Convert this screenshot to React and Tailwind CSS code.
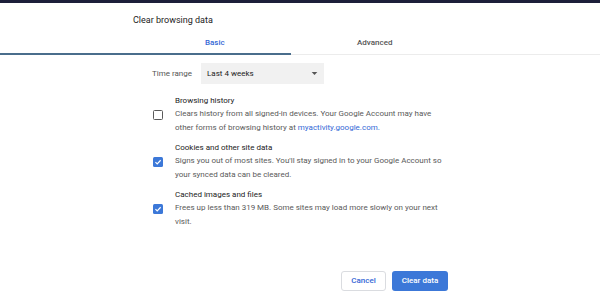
import { useState } from 'react'

function Checkbox({ checked, onChange }) {
  return (
    <button
      onClick={onChange}
      className={`w-[10px] h-[10px] rounded-[1.5px] flex items-center justify-center shrink-0 ${
        checked ? 'bg-[#3c78d8]' : 'border-[1.5px] border-[#5a5a5a] bg-white'
      }`}
    >
      {checked && (
        <svg viewBox="0 0 10 10" className="w-[8px] h-[8px]">
          <path d="M1.8 5.2 L4 7.3 L8.3 2.8" fill="none" stroke="white" strokeWidth="1.5" />
        </svg>
      )}
    </button>
  )
}

export default function App() {
  const [items, setItems] = useState([
    {
      id: 'history',
      title: 'Browsing history',
      desc: (
        <>
          Clears history from all signed-in devices. Your Google Account may have other forms of browsing history at{' '}
          <span className="text-[#3367d6]">myactivity.google.com.</span>
        </>
      ),
      checked: false
    },
    {
      id: 'cookies',
      title: 'Cookies and other site data',
      desc: "Signs you out of most sites. You'll stay signed in to your Google Account so your synced data can be cleared.",
      checked: true
    },
    {
      id: 'cache',
      title: 'Cached images and files',
      desc: 'Frees up less than 319 MB. Some sites may load more slowly on your next visit.',
      checked: true
    }
  ])

  function toggle(id) {
    setItems(prev => prev.map(i => i.id === id ? { ...i, checked: !i.checked } : i))
  }

  return (
    <div className="w-[600px] h-[300px] bg-white overflow-hidden flex flex-col" style={{ fontFamily: 'Roboto, "Liberation Sans", sans-serif' }}>
      <div className="h-[3px] bg-[#1c1f3a]" />

      <div className="pl-[133px] pt-[11px] text-[9px] text-[#222] leading-[12px]">Clear browsing data</div>

      <div className="flex mt-[12px] h-[17px] text-[8px] leading-[10px]">
        <div className="w-[291px] border-b-2 border-[#4a6d8c] pl-[205px] text-[#3367d6] font-medium">Basic</div>
        <div className="flex-1 border-b border-[#ececec] pl-[66px] text-[#555] font-medium">Advanced</div>
      </div>

      <div className="pl-[152px] mt-[8px] flex items-center gap-[9px]">
        <span className="text-[8px] text-[#555]">Time range</span>
        <div className="w-[123px] h-[21px] bg-[#f1f1f1] flex items-center justify-between pl-[6px] pr-[6px] text-[8px] text-[#222]">
          <span>Last 4 weeks</span>
          <svg viewBox="0 0 10 10" className="w-[7px] h-[7px]">
            <path d="M1 3 L9 3 L5 7 Z" fill="#555" />
          </svg>
        </div>
      </div>

      <div className="mt-[11px] flex flex-col gap-[7px] pl-[153px]">
        {items.map(item => (
          <div key={item.id} className="flex items-center gap-[12px]">
            <Checkbox checked={item.checked} onChange={() => toggle(item.id)} />
            <div className="w-[270px]">
              <div className="text-[8px] leading-[12px] text-[#222]">{item.title}</div>
              <div className="text-[8px] leading-[14px] text-[#5a5a5a]">{item.desc}</div>
            </div>
          </div>
        ))}
      </div>

      <div className="mt-auto mb-[9px] flex justify-end gap-[6px] pr-[152px]">
        <button className="w-[45px] h-[20px] rounded-[3px] border border-[#dadce0] text-[8px] font-medium text-[#3367d6] bg-white">Cancel</button>
        <button className="w-[56px] h-[20px] rounded-[3px] bg-[#3c78d8] text-[8px] font-medium text-white">Clear data</button>
      </div>
    </div>
  )
}
